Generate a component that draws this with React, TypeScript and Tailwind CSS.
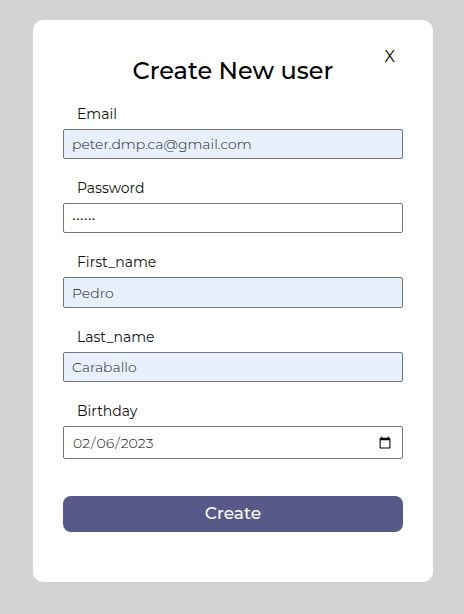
import React from "react";

type FieldProps = {
  id: string;
  label: string;
  type: string;
  value: string;
  className: string;
};

function Field({ id, label, type, value, className }: FieldProps) {
  return (
    <div className="flex flex-col gap-[5px]">
      <label htmlFor={id} className="pl-3.5 text-sm leading-5 text-[#111]">
        {label}
      </label>
      <input
        id={id}
        name={id}
        type={type}
        defaultValue={value}
        className={`w-full rounded-xs border border-[#767676] px-2 text-sm font-light outline-none ${className}`}
      />
    </div>
  );
}

export default function App() {
  return (
    <main className="flex min-h-screen items-start justify-center bg-[#d3d3d3] py-5 pr-[31px] pl-[33px] font-['Montserrat','Inter',sans-serif]">
      <form
        className="w-full max-w-[400px] rounded-[10px] bg-white px-[30px] pt-[25px] pb-[50px]"
        onSubmit={(event) => event.preventDefault()}
      >
        <header className="grid">
          <h1 className="col-start-1 row-start-1 pt-2.5 text-center text-2xl leading-8 font-medium text-black">
            Create New user
          </h1>
          <button
            type="button"
            aria-label="Close"
            className="col-start-1 row-start-1 mr-2 self-start justify-self-end text-base leading-6 text-black"
          >
            X
          </button>
        </header>
        <div className="mt-[17px] flex flex-col gap-[19px]">
          <Field id="email" label="Email" type="email" value="peter.dmp.ca@gmail.com" className="h-[30px] bg-[#e8f0fe] text-[#222]" />
          <Field id="password" label="Password" type="password" value="secret" className="h-[30px] bg-white text-black" />
          <Field id="first_name" label="First_name" type="text" value="Pedro" className="h-[31px] bg-[#e8f0fe] text-[#222]" />
          <Field id="last_name" label="Last_name" type="text" value="Caraballo" className="h-[30px] bg-[#e8f0fe] text-[#222]" />
          <Field id="birthday" label="Birthday" type="date" value="2023-02-06" className="h-[33px] bg-white text-[#222]" />
        </div>
        <button
          type="submit"
          className="mt-[37px] h-9 w-full rounded-[8px] bg-[#575a89] text-[17px] font-medium text-white"
        >
          Create
        </button>
      </form>
    </main>
  );
}
